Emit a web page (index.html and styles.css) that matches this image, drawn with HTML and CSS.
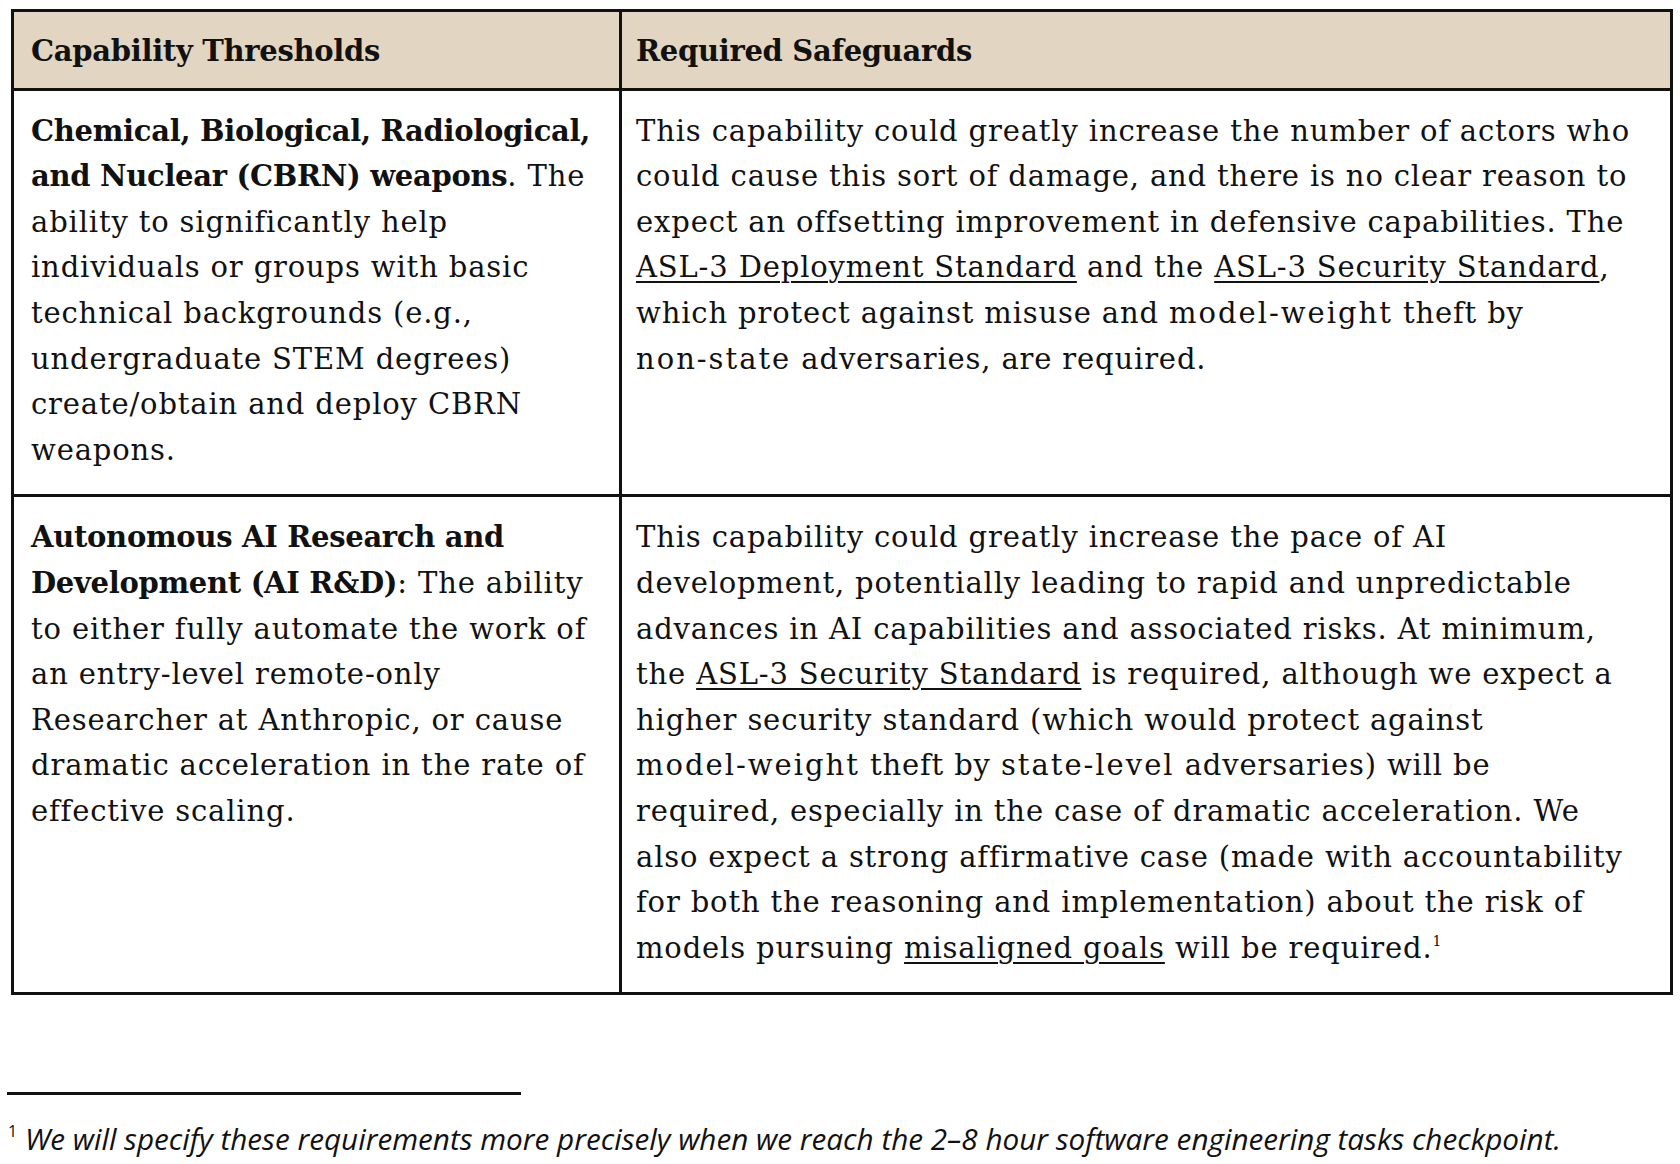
FILE: index.html
```html
<!DOCTYPE html>
<html lang="en">
<head>
<meta charset="utf-8">
<title>Capability Thresholds</title>
<link rel="stylesheet" href="styles.css">
</head>
<body>
<main class="page">
  <table class="cap-table">
    <colgroup>
      <col class="col-left">
      <col class="col-right">
    </colgroup>
    <thead>
      <tr>
        <th>Capability Thresholds</th>
        <th class="right">Required Safeguards</th>
      </tr>
    </thead>
    <tbody>
      <tr>
        <td><strong>Chemical, Biological, Radiological, and Nuclear (CBRN) weapons</strong>. The ability to significantly help individuals or groups with basic technical backgrounds (e.g., undergraduate STEM degrees) create/obtain and deploy CBRN weapons.</td>
        <td class="right">This capability could greatly increase the number of actors who could cause this sort of damage, and there is no clear reason to expect an offsetting improvement in defensive capabilities. The <a href="#" class="nw">ASL-3 Deployment Standard</a> and the <a href="#" class="nw">ASL-3 Security Standard</a>, which protect against misuse and <span class="hw">model-weight</span> theft by <span class="hw">non-state</span> adversaries, are required.</td>
      </tr>
      <tr>
        <td><strong>Autonomous AI Research and Development (AI R&amp;D)</strong>: The ability to either fully automate the work of an <span class="nw">entry-level</span> <span class="nw">remote-only</span> Researcher at Anthropic, or cause dramatic acceleration in the rate of effective scaling.</td>
        <td class="right">This capability could greatly increase the pace of AI development, potentially leading to rapid and unpredictable advances in AI capabilities and associated risks. At minimum, the <a href="#" class="nw">ASL-3 Security Standard</a> is required, although we expect a higher security standard (which would protect against <span class="hw">model-weight</span> theft by <span class="hw">state-level</span> adversaries) will be required, especially in the case of dramatic acceleration. We also expect a strong affirmative case (made with accountability for both the reasoning and implementation) about the risk of models pursuing <a href="#">misaligned goals</a> will be required.<sup class="fn-ref">1</sup></td>
      </tr>
    </tbody>
  </table>

  <footer class="footnotes">
    <hr class="fn-rule">
    <p class="fn"><sup class="fn-num">1</sup> <em>We will specify these requirements more precisely when we reach the 2–8 hour software engineering tasks checkpoint.</em></p>
  </footer>
</main>
</body>
</html>
```

FILE: styles.css
```css
html, body {
  margin: 0;
  padding: 0;
  background: #ffffff;
}

body {
  font-family: "DejaVu Serif", "Liberation Serif", serif;
  color: #111111;
}

.page {
  padding: 9px 11px 0 11px;
}

.cap-table {
  border-collapse: collapse;
  width: 1659px;
  table-layout: fixed;
  font-size: 29px;
  line-height: 45.6px;
  letter-spacing: 0.85px;
}

.col-left { width: 608px; }
.col-right { width: 1051px; }

.cap-table th,
.cap-table td {
  border: 3px solid #111111;
  vertical-align: top;
  text-align: left;
}

.cap-table th {
  background: #e2d5c1;
  font-weight: bold;
  letter-spacing: -0.3px;
  padding: 17px 14px 13px 17px;
}

.cap-table td {
  padding: 18px 12px 21px 17px;
}

.cap-table .right {
  padding-left: 14px;
  padding-right: 36px;
}

.cap-table strong {
  font-weight: bold;
  letter-spacing: -0.3px;
}

.nw {
  white-space: nowrap;
}

.hw {
  white-space: nowrap;
  letter-spacing: 2px;
}

.cap-table a {
  color: #111111;
  text-decoration: underline;
  text-decoration-thickness: 2px;
  text-underline-offset: 4px;
}

.fn-ref {
  font-size: 14px;
  line-height: 0;
  vertical-align: 12px;
  letter-spacing: 0;
}

.footnotes {
  margin-top: 97px;
}

.fn-rule {
  width: 514px;
  margin: 0 0 0 -4px;
  border: 0;
  border-top: 3px solid #111111;
  height: 0;
}

.fn {
  margin: 24px 0 0 -3px;
  font-family: "Open Sans", "DejaVu Sans", sans-serif;
  font-size: 29.7px;
  line-height: 40px;
}

.fn-num {
  font-size: 16px;
  vertical-align: 13px;
  line-height: 0;
  font-style: normal;
}

.fn em {
  font-style: italic;
}
```
